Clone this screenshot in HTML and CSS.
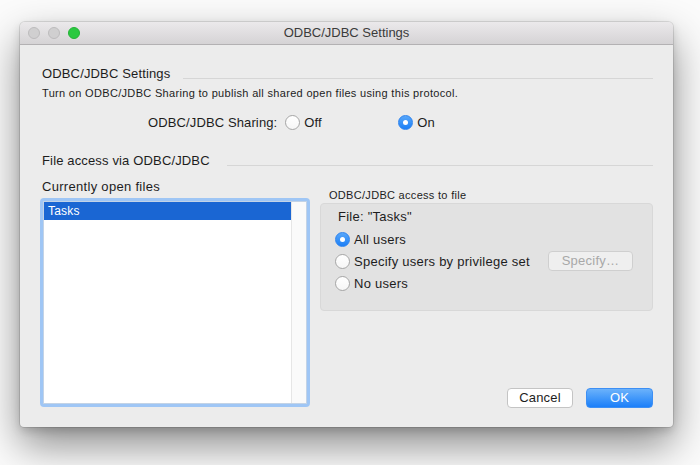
FILE: index.html
```html
<!DOCTYPE html>
<html>
<head>
<meta charset="utf-8">
<link rel="stylesheet" href="styles.css">
</head>
<body>
<div class="window">
  <div class="titlebar">
    <div class="lights">
      <span class="light gray"></span>
      <span class="light gray"></span>
      <span class="light green"></span>
    </div>
    <div class="title">ODBC/JDBC Settings</div>
  </div>
  <div class="content">
    <div class="section-head">ODBC/JDBC Settings</div>
    <div class="desc">Turn on ODBC/JDBC Sharing to publish all shared open files using this protocol.</div>
    <div class="sharing">
      <span class="sharing-label">ODBC/JDBC Sharing:</span>
      <span class="opt opt-off"><span class="radio"></span>Off</span>
      <span class="opt"><span class="radio on"></span>On</span>
    </div>
    <div class="section-head second">File access via ODBC/JDBC</div>
    <div class="bottom">
      <div class="left">
        <div class="list-label">Currently open files</div>
        <div class="listbox">
          <div class="list-inner">
            <div class="rows">
              <div class="row selected">Tasks</div>
            </div>
            <div class="scroll"></div>
          </div>
        </div>
      </div>
      <div class="right">
        <div class="group-label">ODBC/JDBC access to file</div>
        <div class="group">
          <div class="file-name">File: "Tasks"</div>
          <div class="grow"><span class="radio on"></span>All users</div>
          <div class="grow"><span class="radio"></span>Specify users by privilege set<span class="btn-specify">Specify…</span></div>
          <div class="grow"><span class="radio"></span>No users</div>
        </div>
        <div class="actions">
          <span class="btn btn-cancel">Cancel</span>
          <span class="btn btn-ok">OK</span>
        </div>
      </div>
    </div>
  </div>
</div>
</body>
</html>
```
FILE: styles.css
```css
html, body {
  margin: 0;
  padding: 0;
  background: #fbfbfb;
  width: 700px;
  height: 465px;
  overflow: hidden;
}
body {
  font-family: "Liberation Sans", Arial, sans-serif;
  color: #1d1d1d;
  padding-top: 22px;
  padding-left: 20px;
  box-sizing: border-box;
}
.window {
  width: 653px;
  height: 405px;
  background: #ececec;
  border-radius: 5px 5px 4px 4px;
  box-shadow: 0 0 0 1px rgba(0,0,0,0.10), 0 18px 40px rgba(0,0,0,0.45), 0 4px 10px rgba(0,0,0,0.15);
  display: flex;
  flex-direction: column;
  overflow: hidden;
}
.titlebar {
  height: 22px;
  flex: none;
  background: linear-gradient(#ebe9eb, #d5d3d5);
  border-bottom: 1px solid #b3b1b3;
  display: flex;
  align-items: center;
  position: relative;
}
.lights {
  display: flex;
  gap: 8px;
  padding-left: 8px;
}
.light {
  width: 12px;
  height: 12px;
  border-radius: 50%;
  box-sizing: border-box;
}
.light.gray {
  background: #d0cfd0;
  border: 1px solid #bcbbbc;
}
.light.green {
  background: #2ac940;
  border: 1px solid #24b236;
}
.title {
  position: absolute;
  left: 0;
  right: 0;
  top: 0;
  line-height: 22px;
  text-align: center;
  font-size: 13px;
  color: #3b3b3b;
}
.content {
  flex: 1;
  display: flex;
  flex-direction: column;
  padding: 21px 20px 20px 20px;
}
.section-head {
  display: flex;
  font-size: 13px;
  line-height: 16px;
  padding-left: 2px;
  letter-spacing: 0.15px;
}
.section-head::after {
  content: "";
  flex: 1;
  height: 1px;
  background: #d6d6d6;
  margin-top: 12px;
  margin-left: 13px;
}
.section-head.second {
  margin-top: 23px;
}
.section-head.second::after {
  margin-left: 17px;
}
.desc {
  font-size: 11px;
  line-height: 14px;
  margin-top: 4px;
  padding-left: 2px;
  letter-spacing: 0.32px;
}
.sharing {
  display: flex;
  align-items: center;
  height: 16px;
  margin-top: 14px;
  padding-left: 108px;
  font-size: 13px;
  letter-spacing: 0.12px;
}
.sharing-label {
  margin-right: 8px;
}
.opt {
  display: flex;
  align-items: center;
}
.opt-off {
  width: 113px;
}
.radio {
  width: 15px;
  height: 15px;
  border-radius: 50%;
  box-sizing: border-box;
  background: linear-gradient(#ffffff, #f6f6f6);
  border: 1px solid #a6a6a6;
  margin-right: 4px;
  flex: none;
  position: relative;
}
.radio.on {
  background: linear-gradient(#58a7fa, #1b7ff6);
  border: 1px solid #2d83ef;
}
.radio.on::after {
  content: "";
  position: absolute;
  left: 4px;
  top: 4px;
  width: 5px;
  height: 5px;
  border-radius: 50%;
  background: #ffffff;
}
.bottom {
  flex: 1;
  display: grid;
  grid-template-columns: 270px 333px;
  column-gap: 10px;
  margin-top: 10px;
}
.left {
  display: flex;
  flex-direction: column;
}
.list-label {
  font-size: 13px;
  line-height: 16px;
  padding-left: 2px;
  letter-spacing: 0.3px;
}
.listbox {
  margin-top: 3px;
  flex: 1;
  border: 3px solid #9fc6f5;
  border-radius: 4px;
  background: #ffffff;
  display: flex;
}
.list-inner {
  flex: 1;
  border: 1px solid #c3d3e6;
  display: flex;
}
.rows {
  flex: 1;
}
.row {
  height: 18px;
  line-height: 18px;
  font-size: 12px;
  padding-left: 4px;
  letter-spacing: 0.2px;
}
.row.selected {
  background: #1a66d3;
  color: #ffffff;
}
.scroll {
  width: 14px;
  background: #fafafa;
  border-left: 1px solid #e6e6e6;
}
.right {
  display: flex;
  flex-direction: column;
}
.group-label {
  font-size: 11px;
  line-height: 14px;
  margin-top: 9px;
  padding-left: 9px;
  letter-spacing: 0.3px;
}
.group {
  margin-top: 1px;
  height: 108px;
  box-sizing: border-box;
  background: #e2e2e2;
  border: 1px solid #d8d8d8;
  border-radius: 4px;
  padding: 5px 19px 0 14px;
  font-size: 13px;
  letter-spacing: 0.25px;
}
.file-name {
  line-height: 16px;
  padding-left: 3px;
  margin-bottom: 3px;
}
.grow {
  height: 22px;
  display: flex;
  align-items: center;
}
.btn-specify {
  margin-left: auto;
  width: 85px;
  height: 20px;
  box-sizing: border-box;
  border: 1px solid #cfcfcf;
  border-radius: 4px;
  background: #efefef;
  color: #a8a8a8;
  font-size: 13px;
  line-height: 18px;
  text-align: center;
}
.actions {
  margin-top: auto;
  margin-bottom: -1px;
  display: flex;
  justify-content: flex-end;
  gap: 13px;
}
.btn {
  height: 20px;
  box-sizing: border-box;
  border-radius: 4px;
  font-size: 13px;
  line-height: 18px;
  text-align: center;
  letter-spacing: 0.2px;
}
.btn-cancel {
  width: 66px;
  background: #ffffff;
  border: 1px solid #c4c4c4;
  color: #1d1d1d;
}
.btn-ok {
  width: 67px;
  background: linear-gradient(#6bb2fb, #1b7ff9);
  border: 1px solid #3d8ff4;
  color: #ffffff;
}
```
